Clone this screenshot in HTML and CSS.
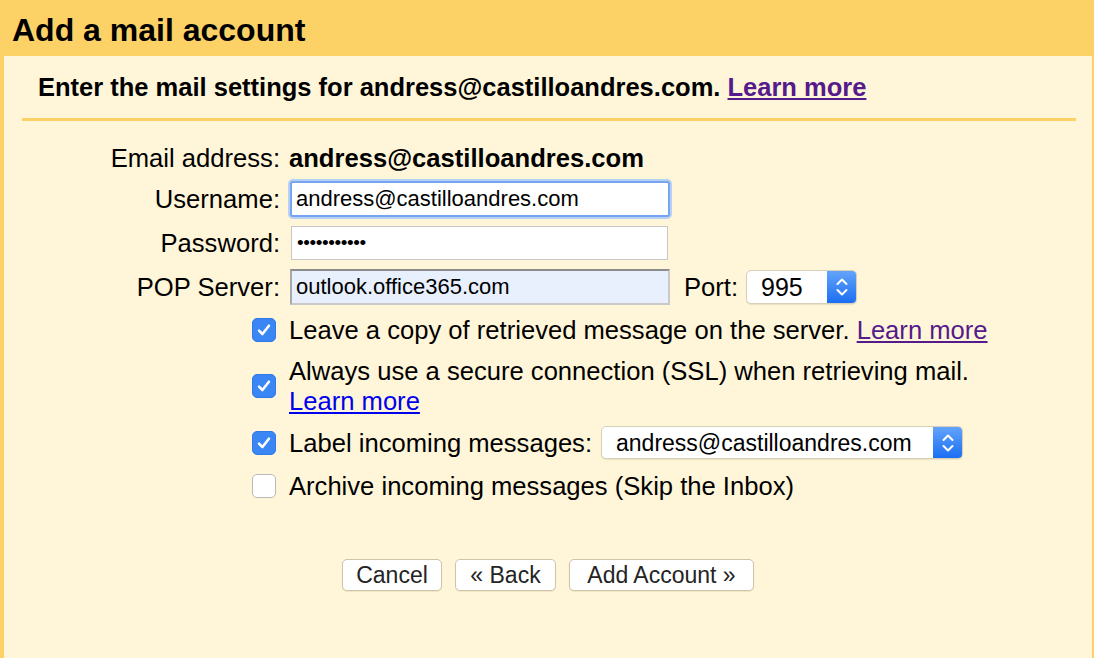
FILE: index.html
```html
<!DOCTYPE html>
<html>
<head>
<meta charset="utf-8">
<link rel="stylesheet" href="styles.css">
</head>
<body>
<div class="dialog">
  <div class="title">Add a mail account</div>
  <div class="body">
    <div class="intro"><b>Enter the mail settings for andress@castilloandres.com.</b> <a class="visited" href="#">Learn more</a></div>
    <div class="rule"></div>
    <div class="form">
      <div class="row row-email">
        <span class="label">Email address:</span>
        <span class="value">andress@castilloandres.com</span>
      </div>
      <div class="row">
        <span class="label">Username:</span>
        <div class="input focused">andress@castilloandres.com</div>
      </div>
      <div class="row">
        <span class="label">Password:</span>
        <div class="input password"><span class="dots">•••••••••••</span></div>
      </div>
      <div class="row">
        <span class="label">POP Server:</span>
        <div class="input autofill">outlook.office365.com</div>
        <span class="port-label">Port:</span>
        <div class="select port"><span class="select-text">995</span><span class="stepper"><svg width="14" height="22" viewBox="0 0 14 22"><path d="M2.5 8 L7 3.5 L11.5 8 M2.5 14 L7 18.5 L11.5 14" fill="none" stroke="#fff" stroke-width="2" stroke-linecap="round" stroke-linejoin="round"/></svg></span></div>
      </div>
    </div>
    <div class="options">
      <div class="opt">
        <span class="cb checked"><svg width="18" height="18" viewBox="0 0 16 16"><path d="M3.6 8.6 L6.6 11.6 L12.4 4.2" fill="none" stroke="#fff" stroke-width="2.3" stroke-linecap="round" stroke-linejoin="round"/></svg></span>
        <span class="opt-text">Leave a copy of retrieved message on the server. <a class="visited" href="#">Learn more</a></span>
      </div>
      <div class="opt">
        <span class="cb checked"><svg width="18" height="18" viewBox="0 0 16 16"><path d="M3.6 8.6 L6.6 11.6 L12.4 4.2" fill="none" stroke="#fff" stroke-width="2.3" stroke-linecap="round" stroke-linejoin="round"/></svg></span>
        <span class="opt-text">Always use a secure connection (SSL) when retrieving mail.<br><a class="link" href="#">Learn more</a></span>
      </div>
      <div class="opt opt-select">
        <span class="cb checked"><svg width="18" height="18" viewBox="0 0 16 16"><path d="M3.6 8.6 L6.6 11.6 L12.4 4.2" fill="none" stroke="#fff" stroke-width="2.3" stroke-linecap="round" stroke-linejoin="round"/></svg></span>
        <span class="opt-text">Label incoming messages:</span>
        <div class="select label-select"><span class="select-text">andress@castilloandres.com</span><span class="stepper"><svg width="14" height="22" viewBox="0 0 14 22"><path d="M2.5 8 L7 3.5 L11.5 8 M2.5 14 L7 18.5 L11.5 14" fill="none" stroke="#fff" stroke-width="2" stroke-linecap="round" stroke-linejoin="round"/></svg></span></div>
      </div>
      <div class="opt">
        <span class="cb"></span>
        <span class="opt-text">Archive incoming messages (Skip the Inbox)</span>
      </div>
    </div>
    <div class="buttons">
      <button class="btn btn-cancel">Cancel</button>
      <button class="btn btn-back">« Back</button>
      <button class="btn btn-add">Add Account »</button>
    </div>
  </div>
</div>
</body>
</html>
```

FILE: styles.css
```css
html, body {
  margin: 0;
  padding: 0;
  height: 100%;
}
body {
  font-family: "Liberation Sans", Arial, Helvetica, sans-serif;
  color: #000;
  background: #fff6d9;
}
.dialog {
  height: 658px;
  display: flex;
  flex-direction: column;
  background: #fff6d9;
  border-left: 4px solid #fcd166;
  border-right: 2px solid #fcd166;
  box-sizing: border-box;
  width: 1094px;
  overflow: hidden;
}
.title {
  background: #fcd166;
  height: 56px;
  margin-left: -4px;
  margin-right: -2px;
  padding-left: 12px;
  font-size: 32px;
  font-weight: bold;
  line-height: 60px;
  box-sizing: border-box;
}
.body {
  padding: 0 16px 0 18px;
  flex: 1;
}
.intro {
  padding: 18px 0 0 16px;
  font-size: 25.5px;
  line-height: 26px;
  height: 26px;
}
.intro b { font-weight: bold; }
.intro a { font-weight: bold; }
a.visited { color: #551a8b; text-decoration: underline; }
a.link { color: #0000ee; text-decoration: underline; }
.rule {
  height: 3px;
  background: #fcd166;
  margin-top: 18px;
}
.form {
  margin-top: 24px;
  display: flex;
  flex-direction: column;
  gap: 9px;
}
.row {
  display: flex;
  align-items: center;
  font-size: 25.6px;
}
.row-email {
  height: 26px;
  margin-bottom: 1px;
}
.label {
  width: 267px;
  text-align: right;
  padding-right: 9px;
  box-sizing: border-box;
  flex: none;
}
.value {
  font-weight: bold;
}
.input {
  width: 380px;
  height: 36px;
  box-sizing: border-box;
  font-size: 22px;
  display: flex;
  align-items: center;
  padding-left: 5px;
  background: #fff;
}
.input.focused {
  margin-left: 1px;
  border: 2px solid #76a5ef;
  box-shadow: 0 0 0 2px #b6d0f6;
  border-radius: 3px;
  padding-left: 4px;
}
.input.password {
  margin-left: 2px;
  width: 377px;
  height: 34px;
  border: 1px solid #c7c7c7;
}
.dots {
  font-size: 19px;
  letter-spacing: -0.4px;
}
.input.autofill {
  margin-left: 1px;
  background: #e8f0fe;
  border-top: 2px solid #8c8c8c;
  border-left: 2px solid #a8a8a8;
  border-right: 2px solid #c9c9c9;
  border-bottom: 2px solid #c9c9c9;
  padding-left: 4px;
}
.port-label {
  margin-left: 14px;
  margin-right: 8px;
}
.select {
  display: flex;
  align-items: stretch;
  background: #fff;
  border: 1px solid #d6cfb9;
  border-radius: 5px;
  box-sizing: border-box;
  box-shadow: 0 1px 1px rgba(120, 100, 40, 0.15);
  overflow: hidden;
  font-size: 23px;
}
.select-text {
  flex: 1;
  display: flex;
  align-items: center;
  padding-left: 14px;
}
.stepper {
  width: 29px;
  flex: none;
  background: linear-gradient(#63a3fa, #1b6ff2);
  display: flex;
  align-items: center;
  justify-content: center;
}
.select.port {
  width: 111px;
  height: 34px;
  font-size: 25px;
}
.select.label-select {
  width: 362px;
  height: 33px;
  margin-left: 9px;
}
.options {
  margin-top: 10px;
  padding-left: 230px;
  display: flex;
  flex-direction: column;
  gap: 11px;
  font-size: 25.6px;
}
.opt {
  display: flex;
  align-items: center;
  min-height: 30px;
  line-height: 30px;
}
.opt-select {
  margin-top: -1px;
  margin-bottom: 1px;
}
.cb {
  width: 24px;
  height: 24px;
  box-sizing: border-box;
  border-radius: 5px;
  flex: none;
  margin-right: 13px;
  display: flex;
  align-items: center;
  justify-content: center;
  background: #fff;
  border: 1px solid #b9b9b9;
}
.cb.checked {
  background: #3a86f5;
  border: 1px solid #3179ea;
}
.buttons {
  margin-top: 58px;
  display: flex;
  justify-content: center;
  gap: 13px;
  margin-left: -18px;
  margin-right: -16px;
}
.btn {
  font-family: "Liberation Sans", Arial, Helvetica, sans-serif;
  font-size: 23px;
  color: #242424;
  background: #fff;
  border: 1px solid #cdc4ab;
  border-radius: 5px;
  height: 32px;
  padding: 0;
  box-shadow: 0 1px 1px rgba(120, 100, 40, 0.12);
  cursor: default;
}
.btn-cancel { width: 100px; }
.btn-back { width: 101px; }
.btn-add { width: 185px; }
```
